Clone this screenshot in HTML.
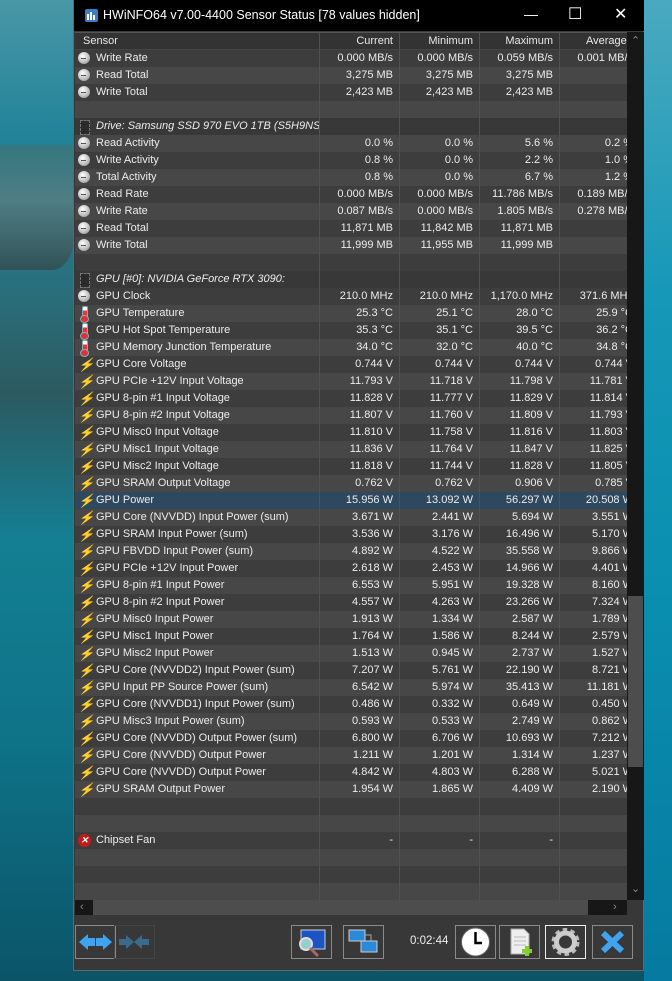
<!DOCTYPE html>
<html><head><meta charset="utf-8"><style>
*{margin:0;padding:0;box-sizing:border-box}
body{width:672px;height:981px;overflow:hidden;position:relative;font-family:"Liberation Sans",sans-serif;font-size:11px;
background:linear-gradient(180deg,#4a97a6 0%,#1f8197 15%,#2a6e7a 30%,#2c5a60 40%,#147f92 55%,#0f7388 75%,#0b5468 100%)}
.wave{position:absolute;left:0;top:145px;width:75px;height:125px;background:linear-gradient(180deg,#3c7378,#5d7f80 45%,#34484a);border-radius:0 0 30% 0;opacity:.75}
.rb{position:absolute;left:644px;top:0;width:28px;height:981px;background:linear-gradient(180deg,#4aa9bf,#1698b8 30%,#0a8fb0 60%,#067aa0 100%)}
.win{position:absolute;left:73px;top:0;width:571px;height:971px;background:#383838;border:1px solid #666;border-top:none}
.title{position:absolute;left:0;top:0;width:570px;height:31px;background:#000;color:#fff;font-size:12.5px}
.title .t{position:absolute;left:29px;top:8px}
.logo{position:absolute;left:11px;top:9px;width:13px;height:13px;background:#3a7fc4;border-radius:2px}
.logo i{position:absolute;bottom:2px;width:2px;background:#fff}
.tb{position:absolute;top:6px;color:#fff;font-size:14px}
.grid{position:absolute;left:1px;top:32px;width:552px;height:868px;overflow:hidden;background:#3a3a3a}
.hdr{height:18px;background:#333;color:#e8e8e8;display:flex;border-top:1px solid #555;border-bottom:1px solid #444}
.hdr span,.r span{display:block;flex:none;height:17px;line-height:17px;white-space:nowrap;overflow:hidden;text-align:right;padding-right:6px;border-left:1px solid #4b5160}
.hdr span{height:16px;line-height:16px}
.r{height:17px;display:flex;color:#ececec;background:#3d3d3d}
.r.hl{background:#2e4860!important}
.r .ic{width:18px;flex:none;position:relative}
.r span.n{width:226px;text-align:left;padding-left:3px;border-left:none}
.hdr span.n{width:244px;text-align:left;padding-left:8px;border-left:none}
.w{width:80px}
.a{width:80px}
.r.g span.n{font-style:italic}
.clk::before{content:"";position:absolute;left:3px;top:2px;width:12px;height:12px;border-radius:50%;background:radial-gradient(circle at 40% 35%,#fff,#bbb 60%,#777)}
.clk::after{content:"";position:absolute;left:6px;top:8px;width:5px;height:1px;background:#555}
.th::before{content:"";position:absolute;left:7px;top:1px;width:4px;height:11px;border:1px solid #8ab;border-radius:2px;background:linear-gradient(#fff 30%,#e33 30%)}
.th::after{content:"";position:absolute;left:5px;top:10px;width:7px;height:6px;border-radius:50%;background:#d33;border:1px solid #8ab}
.bo::before{content:"⚡";position:absolute;left:3px;top:0;color:#f6b21a;font-size:13px;line-height:17px}
.ch::before{content:"";position:absolute;left:5px;top:2px;width:8px;height:13px;background:#2a2a2a;border:1px dashed #777}
.er::before{content:"✕";position:absolute;left:3px;top:2px;width:13px;height:13px;border-radius:50%;background:#c21d1d;color:#fff;font-size:9px;line-height:13px;text-align:center;font-weight:bold}
.vs{position:absolute;left:553px;top:32px;width:17px;height:868px;background:#171717}
.vs .th2{position:absolute;left:1px;top:564px;width:15px;height:171px;background:#4d4d4d}
.hs{position:absolute;left:1px;top:900px;width:552px;height:15px;background:#171717}
.hs div{position:absolute;left:18px;top:0;width:495px;height:15px;background:#4d4d4d}
.arr{position:absolute;color:#888;font-size:11px}
.btn{position:absolute;top:925px;width:41px;height:34px;border:1px solid #8a8a8a}
</style></head><body>
<div class="wave"></div><div class="rb"></div>
<div class="win">
<div class="title"><div class="logo"><i style="left:2px;height:6px"></i><i style="left:5px;height:8px"></i><i style="left:8px;height:5px"></i></div><span class="t">HWiNFO64 v7.00-4400 Sensor Status [78 values hidden]</span>
<span class="tb" style="left:450px">—</span><span class="tb" style="left:494px;top:4px;font-size:16px">☐</span><span class="tb" style="left:540px;font-size:16px;top:4px">✕</span></div>
<div class="grid">
<div class="hdr"><span class="n">Sensor</span><span class="w">Current</span><span class="w">Minimum</span><span class="w">Maximum</span><span class="a" style="text-align:left;padding-left:26px">Average</span></div>
<div id="rows">
<div class="r" style="background:#3d3d3d"><i class="ic clk"></i><span class="n">Write Rate</span><span class="w">0.000 MB/s</span><span class="w">0.000 MB/s</span><span class="w">0.059 MB/s</span><span class="a">0.001 MB/s</span></div>
<div class="r" style="background:#474747"><i class="ic clk"></i><span class="n">Read Total</span><span class="w">3,275 MB</span><span class="w">3,275 MB</span><span class="w">3,275 MB</span><span class="a"></span></div>
<div class="r" style="background:#3d3d3d"><i class="ic clk"></i><span class="n">Write Total</span><span class="w">2,423 MB</span><span class="w">2,423 MB</span><span class="w">2,423 MB</span><span class="a"></span></div>
<div class="r" style="background:#474747"><i class="ic"></i><span class="n"></span><span class="w"></span><span class="w"></span><span class="w"></span><span class="a"></span></div>
<div class="r g" style="background:#383838"><i class="ic ch"></i><span class="n">Drive: Samsung SSD 970 EVO 1TB (S5H9NS...</span><span class="w"></span><span class="w"></span><span class="w"></span><span class="a"></span></div>
<div class="r" style="background:#474747"><i class="ic clk"></i><span class="n">Read Activity</span><span class="w">0.0 %</span><span class="w">0.0 %</span><span class="w">5.6 %</span><span class="a">0.2 %</span></div>
<div class="r" style="background:#3d3d3d"><i class="ic clk"></i><span class="n">Write Activity</span><span class="w">0.8 %</span><span class="w">0.0 %</span><span class="w">2.2 %</span><span class="a">1.0 %</span></div>
<div class="r" style="background:#474747"><i class="ic clk"></i><span class="n">Total Activity</span><span class="w">0.8 %</span><span class="w">0.0 %</span><span class="w">6.7 %</span><span class="a">1.2 %</span></div>
<div class="r" style="background:#3d3d3d"><i class="ic clk"></i><span class="n">Read Rate</span><span class="w">0.000 MB/s</span><span class="w">0.000 MB/s</span><span class="w">11.786 MB/s</span><span class="a">0.189 MB/s</span></div>
<div class="r" style="background:#474747"><i class="ic clk"></i><span class="n">Write Rate</span><span class="w">0.087 MB/s</span><span class="w">0.000 MB/s</span><span class="w">1.805 MB/s</span><span class="a">0.278 MB/s</span></div>
<div class="r" style="background:#3d3d3d"><i class="ic clk"></i><span class="n">Read Total</span><span class="w">11,871 MB</span><span class="w">11,842 MB</span><span class="w">11,871 MB</span><span class="a"></span></div>
<div class="r" style="background:#474747"><i class="ic clk"></i><span class="n">Write Total</span><span class="w">11,999 MB</span><span class="w">11,955 MB</span><span class="w">11,999 MB</span><span class="a"></span></div>
<div class="r" style="background:#3d3d3d"><i class="ic"></i><span class="n"></span><span class="w"></span><span class="w"></span><span class="w"></span><span class="a"></span></div>
<div class="r g" style="background:#383838"><i class="ic ch"></i><span class="n">GPU [#0]: NVIDIA GeForce RTX 3090:</span><span class="w"></span><span class="w"></span><span class="w"></span><span class="a"></span></div>
<div class="r" style="background:#3d3d3d"><i class="ic clk"></i><span class="n">GPU Clock</span><span class="w">210.0 MHz</span><span class="w">210.0 MHz</span><span class="w">1,170.0 MHz</span><span class="a">371.6 MHz</span></div>
<div class="r" style="background:#474747"><i class="ic th"></i><span class="n">GPU Temperature</span><span class="w">25.3 °C</span><span class="w">25.1 °C</span><span class="w">28.0 °C</span><span class="a">25.9 °C</span></div>
<div class="r" style="background:#3d3d3d"><i class="ic th"></i><span class="n">GPU Hot Spot Temperature</span><span class="w">35.3 °C</span><span class="w">35.1 °C</span><span class="w">39.5 °C</span><span class="a">36.2 °C</span></div>
<div class="r" style="background:#474747"><i class="ic th"></i><span class="n">GPU Memory Junction Temperature</span><span class="w">34.0 °C</span><span class="w">32.0 °C</span><span class="w">40.0 °C</span><span class="a">34.8 °C</span></div>
<div class="r" style="background:#3d3d3d"><i class="ic bo"></i><span class="n">GPU Core Voltage</span><span class="w">0.744 V</span><span class="w">0.744 V</span><span class="w">0.744 V</span><span class="a">0.744 V</span></div>
<div class="r" style="background:#474747"><i class="ic bo"></i><span class="n">GPU PCIe +12V Input Voltage</span><span class="w">11.793 V</span><span class="w">11.718 V</span><span class="w">11.798 V</span><span class="a">11.781 V</span></div>
<div class="r" style="background:#3d3d3d"><i class="ic bo"></i><span class="n">GPU 8-pin #1 Input Voltage</span><span class="w">11.828 V</span><span class="w">11.777 V</span><span class="w">11.829 V</span><span class="a">11.814 V</span></div>
<div class="r" style="background:#474747"><i class="ic bo"></i><span class="n">GPU 8-pin #2 Input Voltage</span><span class="w">11.807 V</span><span class="w">11.760 V</span><span class="w">11.809 V</span><span class="a">11.793 V</span></div>
<div class="r" style="background:#3d3d3d"><i class="ic bo"></i><span class="n">GPU Misc0 Input Voltage</span><span class="w">11.810 V</span><span class="w">11.758 V</span><span class="w">11.816 V</span><span class="a">11.803 V</span></div>
<div class="r" style="background:#474747"><i class="ic bo"></i><span class="n">GPU Misc1 Input Voltage</span><span class="w">11.836 V</span><span class="w">11.764 V</span><span class="w">11.847 V</span><span class="a">11.825 V</span></div>
<div class="r" style="background:#3d3d3d"><i class="ic bo"></i><span class="n">GPU Misc2 Input Voltage</span><span class="w">11.818 V</span><span class="w">11.744 V</span><span class="w">11.828 V</span><span class="a">11.805 V</span></div>
<div class="r" style="background:#474747"><i class="ic bo"></i><span class="n">GPU SRAM Output Voltage</span><span class="w">0.762 V</span><span class="w">0.762 V</span><span class="w">0.906 V</span><span class="a">0.785 V</span></div>
<div class="r hl"><i class="ic bo"></i><span class="n">GPU Power</span><span class="w">15.956 W</span><span class="w">13.092 W</span><span class="w">56.297 W</span><span class="a">20.508 W</span></div>
<div class="r" style="background:#474747"><i class="ic bo"></i><span class="n">GPU Core (NVVDD) Input Power (sum)</span><span class="w">3.671 W</span><span class="w">2.441 W</span><span class="w">5.694 W</span><span class="a">3.551 W</span></div>
<div class="r" style="background:#3d3d3d"><i class="ic bo"></i><span class="n">GPU SRAM Input Power (sum)</span><span class="w">3.536 W</span><span class="w">3.176 W</span><span class="w">16.496 W</span><span class="a">5.170 W</span></div>
<div class="r" style="background:#474747"><i class="ic bo"></i><span class="n">GPU FBVDD Input Power (sum)</span><span class="w">4.892 W</span><span class="w">4.522 W</span><span class="w">35.558 W</span><span class="a">9.866 W</span></div>
<div class="r" style="background:#3d3d3d"><i class="ic bo"></i><span class="n">GPU PCIe +12V Input Power</span><span class="w">2.618 W</span><span class="w">2.453 W</span><span class="w">14.966 W</span><span class="a">4.401 W</span></div>
<div class="r" style="background:#474747"><i class="ic bo"></i><span class="n">GPU 8-pin #1 Input Power</span><span class="w">6.553 W</span><span class="w">5.951 W</span><span class="w">19.328 W</span><span class="a">8.160 W</span></div>
<div class="r" style="background:#3d3d3d"><i class="ic bo"></i><span class="n">GPU 8-pin #2 Input Power</span><span class="w">4.557 W</span><span class="w">4.263 W</span><span class="w">23.266 W</span><span class="a">7.324 W</span></div>
<div class="r" style="background:#474747"><i class="ic bo"></i><span class="n">GPU Misc0 Input Power</span><span class="w">1.913 W</span><span class="w">1.334 W</span><span class="w">2.587 W</span><span class="a">1.789 W</span></div>
<div class="r" style="background:#3d3d3d"><i class="ic bo"></i><span class="n">GPU Misc1 Input Power</span><span class="w">1.764 W</span><span class="w">1.586 W</span><span class="w">8.244 W</span><span class="a">2.579 W</span></div>
<div class="r" style="background:#474747"><i class="ic bo"></i><span class="n">GPU Misc2 Input Power</span><span class="w">1.513 W</span><span class="w">0.945 W</span><span class="w">2.737 W</span><span class="a">1.527 W</span></div>
<div class="r" style="background:#3d3d3d"><i class="ic bo"></i><span class="n">GPU Core (NVVDD2) Input Power (sum)</span><span class="w">7.207 W</span><span class="w">5.761 W</span><span class="w">22.190 W</span><span class="a">8.721 W</span></div>
<div class="r" style="background:#474747"><i class="ic bo"></i><span class="n">GPU Input PP Source Power (sum)</span><span class="w">6.542 W</span><span class="w">5.974 W</span><span class="w">35.413 W</span><span class="a">11.181 W</span></div>
<div class="r" style="background:#3d3d3d"><i class="ic bo"></i><span class="n">GPU Core (NVVDD1) Input Power (sum)</span><span class="w">0.486 W</span><span class="w">0.332 W</span><span class="w">0.649 W</span><span class="a">0.450 W</span></div>
<div class="r" style="background:#474747"><i class="ic bo"></i><span class="n">GPU Misc3 Input Power (sum)</span><span class="w">0.593 W</span><span class="w">0.533 W</span><span class="w">2.749 W</span><span class="a">0.862 W</span></div>
<div class="r" style="background:#3d3d3d"><i class="ic bo"></i><span class="n">GPU Core (NVVDD) Output Power (sum)</span><span class="w">6.800 W</span><span class="w">6.706 W</span><span class="w">10.693 W</span><span class="a">7.212 W</span></div>
<div class="r" style="background:#474747"><i class="ic bo"></i><span class="n">GPU Core (NVVDD) Output Power</span><span class="w">1.211 W</span><span class="w">1.201 W</span><span class="w">1.314 W</span><span class="a">1.237 W</span></div>
<div class="r" style="background:#3d3d3d"><i class="ic bo"></i><span class="n">GPU Core (NVVDD) Output Power</span><span class="w">4.842 W</span><span class="w">4.803 W</span><span class="w">6.288 W</span><span class="a">5.021 W</span></div>
<div class="r" style="background:#474747"><i class="ic bo"></i><span class="n">GPU SRAM Output Power</span><span class="w">1.954 W</span><span class="w">1.865 W</span><span class="w">4.409 W</span><span class="a">2.190 W</span></div>
<div class="r" style="background:#3d3d3d"><i class="ic"></i><span class="n"></span><span class="w"></span><span class="w"></span><span class="w"></span><span class="a"></span></div>
<div class="r" style="background:#474747"><i class="ic"></i><span class="n"></span><span class="w"></span><span class="w"></span><span class="w"></span><span class="a"></span></div>
<div class="r" style="background:#3d3d3d"><i class="ic er"></i><span class="n">Chipset Fan</span><span class="w">-</span><span class="w">-</span><span class="w">-</span><span class="a"></span></div>
<div class="r" style="background:#474747"><i class="ic"></i><span class="n"></span><span class="w"></span><span class="w"></span><span class="w"></span><span class="a"></span></div>
<div class="r" style="background:#3d3d3d"><i class="ic"></i><span class="n"></span><span class="w"></span><span class="w"></span><span class="w"></span><span class="a"></span></div>
<div class="r" style="background:#474747"><i class="ic"></i><span class="n"></span><span class="w"></span><span class="w"></span><span class="w"></span><span class="a"></span></div>
</div></div>
<div class="vs"><span class="arr" style="left:4px;top:2px">⌃</span><div class="th2"></div><span class="arr" style="left:4px;top:850px">⌄</span></div>
<div class="hs"><div></div><span class="arr" style="left:5px;top:1px">‹</span><span class="arr" style="left:538px;top:1px">›</span></div>
<div class="btn" style="left:1px"><svg width="39" height="32"><path d="M3 16 L12 8 V12 H19 V20 H12 V24Z" fill="#3fa3ee"/><path d="M36 16 L27 8 V12 H20 V20 H27 V24Z" fill="#3fa3ee"/></svg></div>
<div class="btn" style="left:40px;border-color:#444"><svg width="39" height="32"><path d="M19 16 L11 9 V13 H4 V19 H11 V23Z" fill="#3b6a8c"/><path d="M19 16 L27 9 V13 H34 V19 H27 V23Z" fill="#3b6a8c"/></svg></div>
<div class="btn" style="left:217px"><svg width="39" height="32"><rect x="9" y="4" width="24" height="19" fill="#1c54c4" stroke="#ccc"/><circle cx="14" cy="18" r="6" fill="#9cc" stroke="#ddd" stroke-width="2"/><path d="M18 22 L26 30" stroke="#a66" stroke-width="3"/></svg></div>
<div class="btn" style="left:269px"><svg width="39" height="32"><rect x="5" y="4" width="16" height="11" fill="#2a8ad8" stroke="#ccc"/><rect x="17" y="15" width="16" height="11" fill="#2a8ad8" stroke="#ccc"/><path d="M21 9 H27 V15" stroke="#aaa" fill="none"/></svg></div>
<span style="position:absolute;left:336px;top:935px;color:#eee;font-size:11.5px">0:02:44</span>
<div class="btn" style="left:381px"><svg width="39" height="32"><circle cx="19.5" cy="16" r="14" fill="#fff" stroke="#666"/><path d="M19.5 6 V17 H26" stroke="#000" stroke-width="2.5" fill="none"/></svg></div>
<div class="btn" style="left:425px"><svg width="39" height="32"><path d="M11 3 H24 L29 8 V28 H11Z" fill="#eee" stroke="#aaa"/><path d="M14 11 H26 M14 15 H26 M14 19 H26" stroke="#bbb"/><path d="M27 20 V30 M22 25 H32" stroke="#8c3" stroke-width="4"/></svg></div>
<div class="btn" style="left:471px;border-color:#eee"><svg width="39" height="32"><circle cx="19.5" cy="16" r="11" fill="none" stroke="#bbb" stroke-width="6" stroke-dasharray="4 3"/><circle cx="19.5" cy="16" r="9" fill="none" stroke="#ccc" stroke-width="5"/></svg></div>
<div class="btn" style="left:518px"><svg width="39" height="32"><path d="M10 7 L29 25 M29 7 L10 25" stroke="#3fa3ee" stroke-width="6"/></svg></div>
</div>
</body></html>
